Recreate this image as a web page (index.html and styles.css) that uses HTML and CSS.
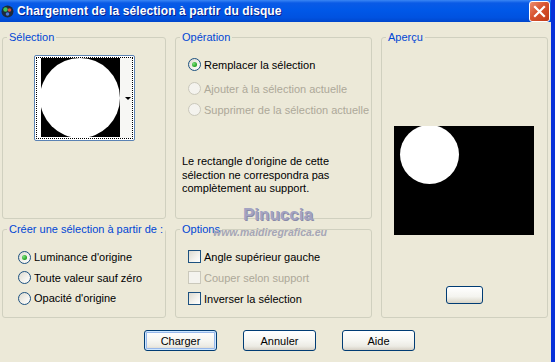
FILE: index.html
```html
<!DOCTYPE html>
<html lang="fr">
<head>
    <meta charset="UTF-8">
    <title>Chargement de la sélection à partir du disque</title>
    <link rel="stylesheet" href="styles.css">
</head>
<body>
    <div class="window">
        <!-- Title bar -->
        <div class="titlebar">
            <svg class="app-icon" width="13" height="13" viewBox="0 0 13 13">
                <circle cx="6.5" cy="6.5" r="6" fill="#1d2a3a"/>
                <circle cx="4.5" cy="4.5" r="2.2" fill="#3fbf5a"/>
                <circle cx="8.5" cy="5" r="1.8" fill="#d94a3a"/>
                <circle cx="6.5" cy="9" r="1.8" fill="#4a7ad9"/>
            </svg>
            <span class="title">Chargement de la sélection à partir du disque</span>
            <div class="close-btn">
                <svg width="13" height="13" viewBox="0 0 13 13">
                    <path d="M2 2 L11 11 M11 2 L2 11" stroke="#fff" stroke-width="2.2" stroke-linecap="square"/>
                </svg>
            </div>
        </div>

        <!-- Dialog client area -->
        <div class="client">
            <div class="groups">
                <fieldset class="group group-selection">
                    <legend>Sélection</legend>
                    <div class="group-body center">
                        <div class="thumb">
                            <div class="thumb-focus">
                                <div class="thumb-img"><div class="disc"></div></div>
                                <div class="thumb-side"><span class="thumb-arrow"></span></div>
                            </div>
                        </div>
                    </div>
                </fieldset>

                <fieldset class="group group-operation">
                    <legend>Opération</legend>
                    <div class="group-body">
                        <div class="row first"><span class="radio checked"></span>Remplacer la sélection</div>
                        <div class="row disabled"><span class="radio"></span>Ajouter à la sélection actuelle</div>
                        <div class="row disabled"><span class="radio"></span>Supprimer de la sélection actuelle</div>
                        <p class="note">Le rectangle d'origine de cette sélection ne correspondra pas complètement au support.</p>
                    </div>
                </fieldset>

                <fieldset class="group group-preview">
                    <legend>Aperçu</legend>
                    <div class="group-body center">
                        <div class="preview"><div class="preview-disc"></div></div>
                        <div class="small-btn"></div>
                    </div>
                </fieldset>

                <fieldset class="group group-source">
                    <legend>Créer une sélection à partir de :</legend>
                    <div class="group-body">
                        <div class="row"><span class="radio checked"></span>Luminance d'origine</div>
                        <div class="row"><span class="radio"></span>Toute valeur sauf zéro</div>
                        <div class="row"><span class="radio"></span>Opacité d'origine</div>
                    </div>
                </fieldset>

                <fieldset class="group group-options">
                    <legend>Options</legend>
                    <div class="group-body">
                        <div class="row"><span class="check"></span>Angle supérieur gauche</div>
                        <div class="row disabled"><span class="check"></span>Couper selon support</div>
                        <div class="row"><span class="check"></span>Inverser la sélection</div>
                    </div>
                </fieldset>
            </div>

            <div class="buttons">
                <button class="btn default">Charger</button>
                <button class="btn">Annuler</button>
                <button class="btn">Aide</button>
            </div>

            <!-- Watermark from the captured image -->
            <div class="watermark">
                <span class="wm-name">Pinuccia</span>
                <span class="wm-url">www.maidiregrafica.eu</span>
            </div>
        </div>
    </div>
</body>
</html>
```

FILE: styles.css
```css
body {
    margin: 0;
    padding: 0;
    background: #ece9d8;
    font-family: "Liberation Sans", Arial, sans-serif;
    font-size: 11px;
    color: #000;
}

.window {
    width: 551px;
    height: 362px;
    border-right: 4px solid #0831d9;
    display: flex;
    flex-direction: column;
    overflow: hidden;
}

/* Title bar */
.titlebar {
    height: 22px;
    flex: none;
    display: flex;
    align-items: center;
    background: linear-gradient(#3a86f4 0, #0a5ae6 3px, #0058e8 45%, #0052e0 80%, #0046cc 100%);
    margin-right: -4px;
}

.app-icon {
    margin: 0 3px 0 1px;
}

.title {
    flex: 1;
    color: #fff;
    font-weight: bold;
    font-size: 12px;
    letter-spacing: 0.1px;
    text-shadow: 1px 1px 0 #0a1f8a;
}

.close-btn {
    width: 19px;
    height: 19px;
    margin-right: 5px;
    border: 1px solid #fff;
    border-radius: 3px;
    background: linear-gradient(135deg, #ec8d6e 0, #d7532f 45%, #c23a16 100%);
    display: flex;
    align-items: center;
    justify-content: center;
}

/* Client area */
.client {
    flex: 1;
    position: relative;
    padding: 9px 3px 0 2px;
}

.groups {
    display: grid;
    grid-template-columns: 164px 197px 167px;
    grid-template-rows: 188px 95px;
    column-gap: 9px;
    row-gap: 4px;
}

.group {
    margin: 0;
    padding: 0;
    min-width: 0;
    border: 1px solid #d0d0bf;
    border-radius: 3px;
}

.group legend {
    color: #0046d5;
    padding: 0 2px;
    margin-left: 4px;
    line-height: 13px;
    white-space: nowrap;
}

.group-preview {
    grid-column: 3;
    grid-row: 1 / span 2;
}

.group-source {
    grid-column: 1;
    grid-row: 2;
}

.group-options {
    grid-column: 2;
    grid-row: 2;
}

.group-body {
    display: flex;
    flex-direction: column;
}

.group-body.center {
    align-items: center;
}

/* Selection thumbnail */
.group-selection .group-body {
    padding-top: 11px;
}

.thumb {
    width: 101px;
    height: 86px;
    box-sizing: border-box;
    border: 1px solid #5a82b4;
    border-radius: 2px;
    background: #fff;
    padding: 1px;
}

.thumb-focus {
    height: 100%;
    box-sizing: border-box;
    border: 1px dotted #000;
    display: flex;
    align-items: flex-start;
}

.thumb-img {
    flex: none;
    width: 79px;
    height: 79px;
    margin-left: 4px;
    background: #000;
    overflow: hidden;
    display: flex;
    align-items: center;
    justify-content: center;
}

.disc {
    flex: none;
    width: 80px;
    height: 80px;
    border-radius: 50%;
    background: #fff;
}

.thumb-side {
    flex: 1;
    align-self: stretch;
    background: #f7f7f4;
    display: flex;
    justify-content: flex-end;
    align-items: center;
    padding-right: 1px;
}

.thumb-arrow {
    border-left: 3px solid transparent;
    border-right: 3px solid transparent;
    border-top: 3px solid #000;
}

/* Radios and checkboxes */
.row {
    height: 21px;
    display: flex;
    align-items: center;
    white-space: nowrap;
}

.row.disabled {
    color: #aca899;
}

.radio,
.check {
    flex: none;
    width: 13px;
    height: 13px;
    box-sizing: border-box;
    border: 1px solid #1c5180;
    margin-right: 3px;
    background: linear-gradient(135deg, #dcdad0 0, #f4f3ee 60%, #fff 100%);
    display: flex;
    align-items: center;
    justify-content: center;
}

.radio {
    border-radius: 50%;
}

.radio.checked::after {
    content: "";
    width: 5px;
    height: 5px;
    border-radius: 50%;
    background: radial-gradient(circle at 35% 35%, #7be07b, #21a121 70%);
}

.row.disabled .radio,
.row.disabled .check {
    border-color: #cac8bb;
    background: #f4f3ee;
}

.group-operation .group-body {
    padding: 10px 0 0 12px;
}

.group-operation .row.first {
    margin-bottom: 3px;
}

.note {
    margin: 35px 0 0 -6px;
    line-height: 13.5px;
    width: 180px;
}

.group-source .group-body {
    padding: 11px 0 0 15px;
}

.group-source .row {
    height: 20.5px;
}

.group-options .group-body {
    padding: 10px 0 0 12px;
}

/* Preview */
.preview {
    width: 140px;
    height: 109px;
    margin-top: 82px;
    background: #000;
    overflow: hidden;
    align-self: flex-start;
    margin-left: 12px;
}

.preview-disc {
    width: 59px;
    height: 59px;
    margin: -1px 0 0 6px;
    border-radius: 50%;
    background: #fff;
}

.small-btn {
    width: 37px;
    height: 18px;
    margin-top: 51px;
    box-sizing: border-box;
    border: 1px solid #003c74;
    border-radius: 3px;
    background: linear-gradient(#fff 0, #f4f4ef 60%, #d8d4c6 100%);
}

/* Dialog buttons */
.buttons {
    display: flex;
    gap: 26px;
    padding: 12px 0 0 142px;
}

.btn {
    width: 73px;
    height: 21px;
    padding: 0;
    border: 1px solid #003c74;
    border-radius: 3px;
    background: linear-gradient(#fff 0, #f6f6f2 50%, #ecebe4 80%, #d6d0c5 100%);
    font-family: "Liberation Sans", Arial, sans-serif;
    font-size: 11px;
    color: #000;
}

.btn.default {
    box-shadow: inset 0 0 0 1px #cee7ff, inset 0 0 0 2px #98b8ea;
}

/* Watermark overlay */
.watermark {
    position: absolute;
    left: 213px;
    top: 182px;
    display: flex;
    flex-direction: column;
    align-items: flex-start;
    pointer-events: none;
}

.wm-name {
    margin-left: 30px;
    font-size: 17px;
    font-weight: bold;
    color: #a3a3c2;
    text-shadow: 1px 1px 0 #8a8aa8;
    line-height: 22px;
}

.wm-url {
    font-size: 10.5px;
    font-weight: bold;
    font-style: italic;
    color: #a6a6b6;
    line-height: 12px;
}
```
